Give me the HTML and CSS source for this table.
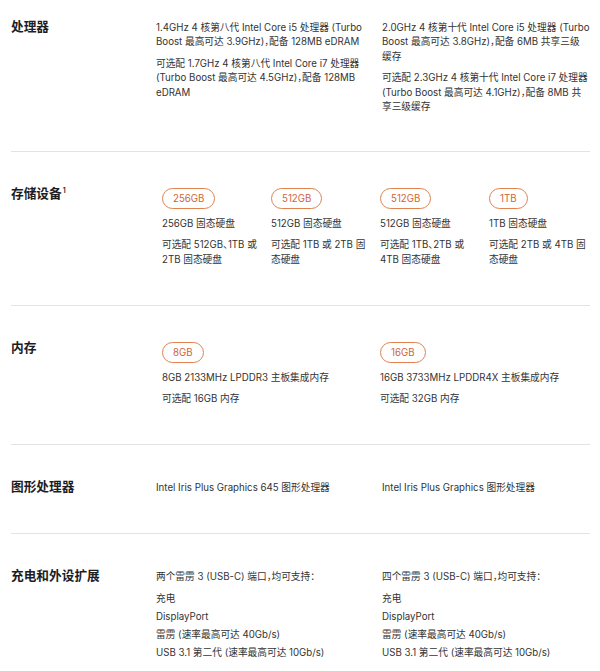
FILE: index.html
```html
<!DOCTYPE html>
<html lang="zh-CN">
<head>
<meta charset="utf-8">
<title>技术规格</title>
<link rel="stylesheet" href="styles.css">
</head>
<body>
<main class="specs">
  <section class="row">
    <h3 class="label">处理器</h3>
    <div class="cols cols-2">
      <div class="col">
        <p>1.4GHz 4 核第八代 Intel Core i5 处理器 (Turbo Boost 最高可达 3.9GHz)，配备 128MB eDRAM</p>
        <p>可选配 1.7GHz 4 核第八代 Intel Core i7 处理器 (Turbo Boost 最高可达 4.5GHz)，配备 128MB eDRAM</p>
      </div>
      <div class="col">
        <p>2.0GHz 4 核第十代 Intel Core i5 处理器 (Turbo Boost 最高可达 3.8GHz)，配备 6MB 共享三级<span class="nb">缓存</span></p>
        <p>可选配 2.3GHz 4 核第十代 Intel Core i7 处理器 (Turbo Boost 最高可达 4.1GHz)，配备 8MB 共享三级缓存</p>
      </div>
    </div>
  </section>

  <section class="row">
    <h3 class="label">存储设备<sup class="note">1</sup></h3>
    <div class="cols cols-4">
      <div class="col">
        <span class="pill">256GB</span>
        <p>256GB 固态硬盘</p>
        <p>可选配 512GB、1TB 或 2TB 固态硬盘</p>
      </div>
      <div class="col">
        <span class="pill">512GB</span>
        <p>512GB 固态硬盘</p>
        <p>可选配 1TB 或 2TB 固态硬盘</p>
      </div>
      <div class="col">
        <span class="pill">512GB</span>
        <p>512GB 固态硬盘</p>
        <p>可选配 1TB、2TB 或 4TB 固态硬盘</p>
      </div>
      <div class="col">
        <span class="pill">1TB</span>
        <p>1TB 固态硬盘</p>
        <p>可选配 2TB 或 4TB 固态硬盘</p>
      </div>
    </div>
  </section>

  <section class="row">
    <h3 class="label">内存</h3>
    <div class="cols cols-mem">
      <div class="col">
        <span class="pill">8GB</span>
        <p>8GB 2133MHz LPDDR3 主板集成内存</p>
        <p>可选配 16GB 内存</p>
      </div>
      <div class="col">
        <span class="pill">16GB</span>
        <p>16GB 3733MHz LPDDR4X 主板集成内存</p>
        <p>可选配 32GB 内存</p>
      </div>
    </div>
  </section>

  <section class="row">
    <h3 class="label">图形处理器</h3>
    <div class="cols cols-2">
      <div class="col">
        <p>Intel Iris Plus Graphics 645 图形处理器</p>
      </div>
      <div class="col">
        <p>Intel Iris Plus Graphics 图形处理器</p>
      </div>
    </div>
  </section>

  <section class="row row-last">
    <h3 class="label">充电和外设扩展</h3>
    <div class="cols cols-2">
      <div class="col">
        <p class="intro">两个雷雳 3 (USB-C) 端口，均可支持：</p>
        <ul class="list">
          <li>充电</li>
          <li>DisplayPort</li>
          <li>雷雳 (速率最高可达 40Gb/s)</li>
          <li>USB 3.1 第二代 (速率最高可达 10Gb/s)</li>
        </ul>
      </div>
      <div class="col">
        <p class="intro">四个雷雳 3 (USB-C) 端口，均可支持：</p>
        <ul class="list">
          <li>充电</li>
          <li>DisplayPort</li>
          <li>雷雳 (速率最高可达 40Gb/s)</li>
          <li>USB 3.1 第二代 (速率最高可达 10Gb/s)</li>
        </ul>
      </div>
    </div>
  </section>
</main>
</body>
</html>
```

FILE: styles.css
```css
body {
  margin: 0;
  background: #ffffff;
  color: #333333;
  font-family: Inter, "Noto Sans CJK SC", sans-serif;
  font-feature-settings: "halt";
}

.specs {
  padding: 20.5px 10px 0 11px;
}

.row {
  display: grid;
  grid-template-columns: 145px 1fr;
  padding: 36px 0 37.5px;
  border-bottom: 1px solid #e3e3e3;
}

.row:first-child {
  padding-top: 0;
  padding-bottom: 36px;
}

.row-last {
  border-bottom: none;
}

.label {
  margin: -2px 0 0;
  font-size: 12.7px;
  line-height: 16px;
  font-weight: 600;
  color: #1d1d1f;
}

.note {
  font-size: 7px;
  vertical-align: top;
  position: relative;
  top: -3px;
  margin-left: 1px;
}

.cols {
  display: grid;
  font-size: 9.7px;
}

.cols-2 {
  grid-template-columns: repeat(2, 1fr);
  column-gap: 18px;
}

.cols-4 {
  grid-template-columns: repeat(4, 1fr);
  column-gap: 8px;
  padding-left: 6px;
}

.cols-mem {
  grid-template-columns: repeat(2, 1fr);
  column-gap: 8px;
  padding-left: 6px;
}

.col p {
  margin: 0 0 7px;
  line-height: 14.5px;
}

.col p:last-child {
  margin-bottom: 0;
}

.nb {
  white-space: nowrap;
}

.pill {
  display: block;
  width: fit-content;
  margin-bottom: 8px;
  padding: 0 10px;
  border: 1px solid #e0824f;
  border-radius: 11px;
  color: #d2643a;
  line-height: 19px;
}

.col p.intro {
  margin-bottom: 5.5px;
}

.list {
  margin: 0;
  padding: 0;
  list-style: none;
  line-height: 18px;
}
```
